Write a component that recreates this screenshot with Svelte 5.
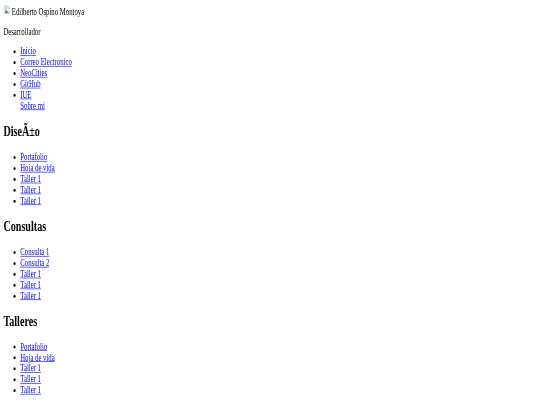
<script>
	const sections = [
		{ title: 'DiseÃ±o', links: ['Portafolio', 'Hoja de vida', 'Taller 1', 'Taller 1', 'Taller 1'] },
		{ title: 'Consultas', links: ['Consulta 1', 'Consulta 2', 'Taller 1', 'Taller 1', 'Taller 1'] },
		{ title: 'Talleres', links: ['Portafolio', 'Hoja de vida', 'Taller 1', 'Taller 1', 'Taller 1'] }
	];
	const nav = ['Inicio', 'Correo Electronico', 'NeoCities', 'GitHub'];
</script>

<div class="page">
	<div class="logo">
		<svg class="broken" width="16" height="16" viewBox="0 0 16 16" aria-hidden="true">
			<path d="M1.500 1.500h9l4 4v9h-13z" fill="#fff" stroke="#a8a8a8" />
			<path d="M10.500 1.500v4h4" fill="#eee" stroke="#a8a8a8" />
			<path d="M3 3h6v9H3z" fill="#c3d4ee" />
			<path d="M3 13.500 6.500 8l3 3 1-1 2.500 3.500z" fill="#4fa04a" />
		</svg>
		<span>Edilberto Ospino Montoya</span>
	</div>
	<p>Desarrollador</p>

	<ul>
		{#each nav as item}
			<li><a href="#top">{item}</a></li>
		{/each}
		<li><a href="#top">IUE</a><br /><a href="#top">Sobre mi</a></li>
	</ul>

	{#each sections as section}
		<h2>{section.title}</h2>
		<ul>
			{#each section.links as link}
				<li><a href="#top">{link}</a></li>
			{/each}
		</ul>
	{/each}
</div>

<style>
	:global(body) {
		overflow: hidden;
		background: #fff;
	}

	.page {
		width: 1280px;
		padding: 8px;
		box-sizing: border-box;
		font-family: "Liberation Serif", serif;
		font-size: 16px;
		color: #000;
		transform: scale(0.421875, 0.605);
		transform-origin: 0 0;
		filter: blur(0.8px);
	}

	.broken {
		vertical-align: baseline;
	}

	p {
		margin: 16px 0 14px;
	}

	ul {
		margin: 14px 0 16px;
		padding-left: 40px;
	}

	h2 {
		margin: 0.83em 0;
		font-size: 24px;
		font-weight: bold;
	}

	a {
		color: #00e;
		text-decoration: underline;
	}
</style>
